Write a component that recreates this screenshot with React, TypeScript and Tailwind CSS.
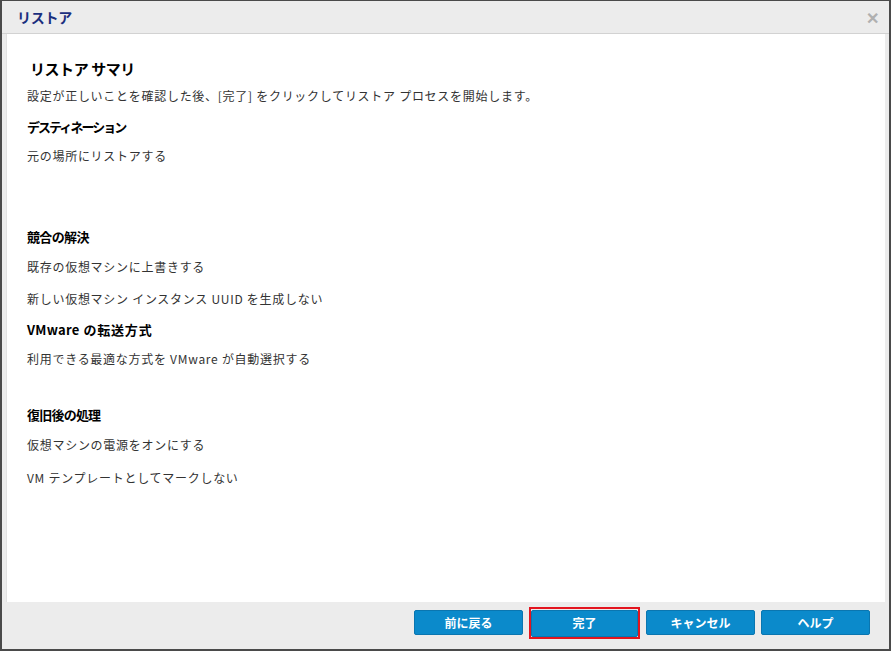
import React from 'react';

const font = { fontFamily: '"Noto Sans CJK JP", "Liberation Sans", sans-serif' };

const Heading: React.FC<{ children: React.ReactNode; className?: string }> = ({
  children,
  className = 'tracking-[-0.15em]',
}) => <div className={`h-[18px] leading-[18px] text-[13px] font-bold text-black ${className}`}>{children}</div>;

const Item: React.FC<{ children: React.ReactNode; className?: string }> = ({ children, className = '' }) => (
  <div className={`h-[18px] leading-[18px] text-[12px] text-[#333] tracking-[0.06em] ${className}`}>{children}</div>
);

const Btn: React.FC<{ label: string; className?: string }> = ({ label, className = 'w-[109px] h-[25px]' }) => (
  <button className={`${className} rounded-[2px] bg-[#0b8acb] border border-[#0a76b0] text-white text-[12px] font-bold leading-none`}>
    {label}
  </button>
);

export default function App() {
  return (
    <div className="w-[891px] h-[651px] bg-[#ececec] border-x-2 border-t border-b-2 border-[#4a4a4a] flex flex-col" style={font}>
      {/* Title bar */}
      <div className="h-[33px] flex items-center justify-between pl-[15px] pr-[10px] border-b border-[#d2d2d2]">
        <span className="text-[14px] font-bold text-[#1b2f7e] tracking-[-0.02em]">リストア</span>
        <span className="text-[16px] font-bold text-[#b0b0b0] leading-none">✕</span>
      </div>

      {/* Content */}
      <div className="mx-[4px] h-[568px] bg-white border-l border-[#e2e2e2] pl-[20px]">
        <div className="pt-[25px] h-[45px] leading-[20px] text-[15px] font-bold text-black pl-[3px] tracking-[-0.03em]">リストア サマリ</div>
        <Item className="mt-[8px]">設定が正しいことを確認した後、[完了] をクリックしてリストア プロセスを開始します。</Item>
        <Heading className="mt-[13px] tracking-[-0.15em]">デスティネーション</Heading>
        <Item className="mt-[11px]">元の場所にリストアする</Item>
        <Heading className="mt-[63px] tracking-[-0.05em]">競合の解決</Heading>
        <Item className="mt-[12px]">既存の仮想マシンに上書きする</Item>
        <Item className="mt-[14px]">新しい仮想マシン インスタンス UUID を生成しない</Item>
        <Heading className="mt-[13px] tracking-normal">
          <span className="tracking-[0.02em]">VMware</span>
          <span className="ml-[4px] tracking-[0.06em]">の転送方式</span>
        </Heading>
        <Item className="mt-[11px]">利用できる最適な方式を VMware が自動選択する</Item>
        <Heading className="mt-[38px] tracking-[-0.06em]">復旧後の処理</Heading>
        <Item className="mt-[12px]">仮想マシンの電源をオンにする</Item>
        <Item className="mt-[15px]">VM テンプレートとしてマークしない</Item>
      </div>

      {/* Footer */}
      <div className="flex-1 flex items-start justify-end gap-[6px] pt-[8px] pr-[19px]">
        <Btn label="前に戻る" />
        <div className="-mt-[3px] border-2 border-[#e3151f]">
          <Btn label="完了" className="w-[107px] h-[27px]" />
        </div>
        <Btn label="キャンセル" />
        <Btn label="ヘルプ" />
      </div>
    </div>
  );
}
